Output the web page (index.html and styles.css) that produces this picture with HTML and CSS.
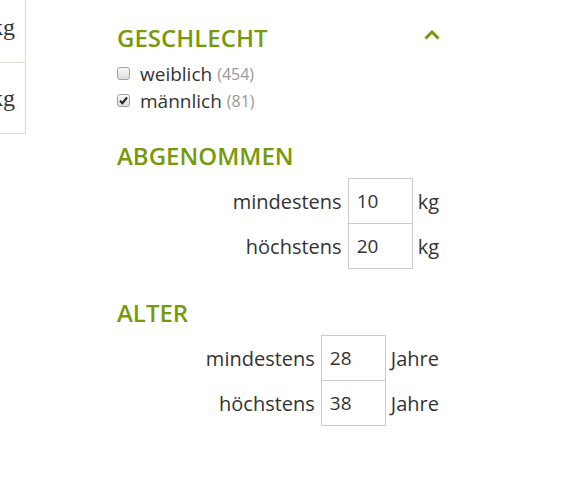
FILE: index.html
```html
<!DOCTYPE html>
<html lang="de">
<head>
    <meta charset="UTF-8">
    <meta name="viewport" content="width=device-width, initial-scale=1.0">
    <title>Filter</title>
    <link rel="stylesheet" href="styles.css">
</head>
<body>
    <div class="page">
        <div class="side">
            <div class="side-cell">kg</div>
            <div class="side-cell">kg</div>
        </div>

        <div class="filters">
            <div class="section">
                <div class="section-head">
                    <h2>GESCHLECHT</h2>
                    <svg class="chevron" width="16" height="10" viewBox="0 0 16 10">
                        <polyline points="1.5,8.5 8,2 14.5,8.5" fill="none" stroke="#779a0b" stroke-width="3"/>
                    </svg>
                </div>
                <label class="option">
                    <input type="checkbox" name="gender" value="w">
                    <span class="box"></span>
                    <span>weiblich</span> <span class="count">(454)</span>
                </label>
                <label class="option">
                    <input type="checkbox" name="gender" value="m" checked>
                    <span class="box">
                        <svg width="9" height="9" viewBox="0 0 9 9">
                            <polyline points="1,4.8 3.4,7.2 8,1.5" fill="none" stroke="#222" stroke-width="2"/>
                        </svg>
                    </span>
                    <span>männlich</span> <span class="count">(81)</span>
                </label>
            </div>

            <div class="section">
                <h2>ABGENOMMEN</h2>
                <div class="range">
                    <div class="range-row">
                        <span class="range-label">mindestens</span>
                        <input class="range-input" type="text" value="10">
                        <span class="range-unit">kg</span>
                    </div>
                    <div class="range-row">
                        <span class="range-label">höchstens</span>
                        <input class="range-input" type="text" value="20">
                        <span class="range-unit">kg</span>
                    </div>
                </div>
            </div>

            <div class="section section-age">
                <h2>ALTER</h2>
                <div class="range">
                    <div class="range-row">
                        <span class="range-label">mindestens</span>
                        <input class="range-input" type="text" value="28">
                        <span class="range-unit">Jahre</span>
                    </div>
                    <div class="range-row">
                        <span class="range-label">höchstens</span>
                        <input class="range-input" type="text" value="38">
                        <span class="range-unit">Jahre</span>
                    </div>
                </div>
            </div>
        </div>
    </div>
</body>
</html>
```

FILE: styles.css
```css
body {
    margin: 0;
    background: #fff;
    font-family: "Open Sans", "Liberation Sans", sans-serif;
    color: #333;
}

.page {
    display: flex;
    align-items: flex-start;
}

/* leftover column of the table on the left */
.side {
    width: 25px;
    margin-top: -8px;
    border-right: 1px solid #dedcd0;
    overflow: hidden;
}
.side-cell {
    display: flex;
    justify-content: flex-end;
    align-items: center;
    height: 70px;
    border-bottom: 1px solid #dedcd0;
    padding-right: 10px;
    font-family: "Liberation Serif", serif;
    font-size: 24px;
    color: #333;
    white-space: nowrap;
}

.filters {
    width: 322px;
    margin-left: 91px;
    padding-top: 23px;
}

.section {
    margin-bottom: 27px;
}
.section-age {
    margin-top: 29px;
}

.section-head {
    display: flex;
    justify-content: space-between;
    align-items: center;
}

h2 {
    margin: 0;
    font-size: 24px;
    line-height: 30px;
    font-weight: 600;
    color: #779a0b;
}

.chevron {
    margin-right: -1px;
    margin-top: -6px;
}

.option {
    display: flex;
    align-items: center;
    height: 27px;
    font-size: 19px;
}
.option:first-of-type {
    margin-top: 7px;
}
.option input {
    display: none;
}
.box {
    display: flex;
    align-items: center;
    justify-content: center;
    box-sizing: border-box;
    width: 13px;
    height: 13px;
    margin: 0 10px 0 0;
    border: 1px solid #a3a3a3;
    border-radius: 3px;
    background: linear-gradient(#fafafa, #dcdcdc);
}
.count {
    margin-left: 5px;
    font-size: 16px;
    color: #999;
}

.range {
    margin-top: 7px;
}
.range-row {
    display: flex;
    justify-content: flex-end;
    align-items: center;
    font-size: 20px;
}
.range-row + .range-row {
    margin-top: -1px;
}
.range-label {
    margin-right: 6px;
}
.range-input {
    box-sizing: border-box;
    width: 65px;
    height: 46px;
    padding: 0 8px;
    border: 1px solid #ccc;
    font-family: inherit;
    font-size: 19px;
    color: #333;
}
.range-unit {
    margin-left: 5px;
}
```
